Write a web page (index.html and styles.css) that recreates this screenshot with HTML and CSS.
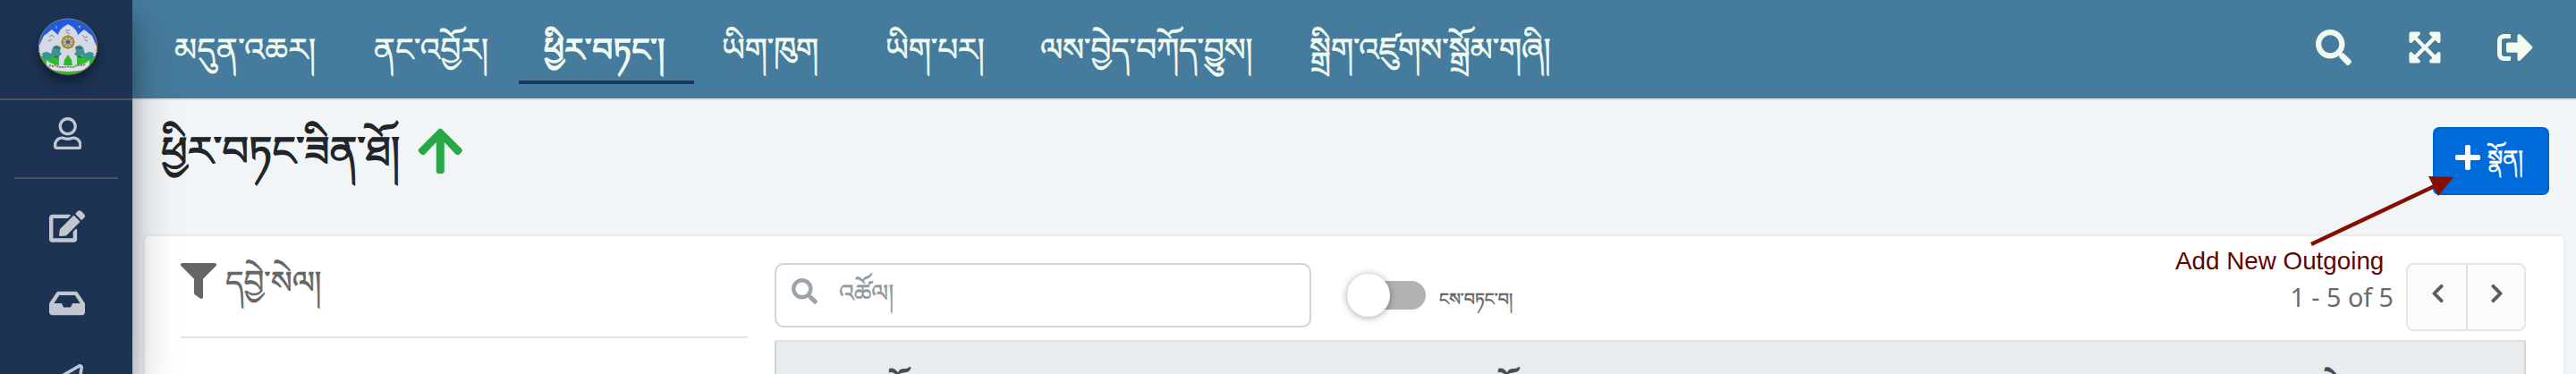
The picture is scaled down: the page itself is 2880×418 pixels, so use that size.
FILE: index.html
```html
<!DOCTYPE html>
<html lang="bo">
<head>
<meta charset="utf-8">
<title>ཕྱིར་བཏང་ཟིན་ཐོ།</title>
<link rel="stylesheet" href="styles.css">
</head>
<body>
<div class="app">
  <aside class="sidebar">
    <div class="brand">
      <svg class="logo" viewBox="0 0 68 66">
        <defs><clipPath id="seal"><ellipse cx="34" cy="33" rx="33" ry="31.5"/></clipPath></defs>
        <g clip-path="url(#seal)">
          <rect width="68" height="66" fill="#1f5ae0"/>
          <rect y="42" width="68" height="24" fill="#2cbf2c"/>
          <path d="M0 44V36L7 21L16 14L23 20Q24 13 34 8Q44 13 45 20L52 14L61 21L68 38V44Z" fill="#d5d9e6"/>
          <path d="M13 22l3-2 3 3M12 27l4-2M31 15h5M32 17l4 2M50 20l3 3 3-1M52 25l4 2" stroke="#666b75" stroke-width=".8" fill="none"/>
          <path d="M21 10v3" stroke="#b9c8ee"/><circle cx="47" cy="11" r="1.4" fill="#a8a055"/>
          <path d="M5 41q4-4 10 0l2-7q4-5 9 0l-1 5 4 4-6 2-5-2-6 5-6-3z" fill="#35969a"/>
          <path d="M63 41q-4-4-10 0l-2-7q-4-5-9 0l1 5-4 4 6 2 5-2 6 5 6-3z" fill="#35969a"/>
          <path d="M19 34l6 1M18 44l5 1M43 34l6 1M45 44l5 1" stroke="#65565d" stroke-width="2"/>
          <path d="M24 44l5-5 5 3 5-3 5 5v12H24z" fill="#d5d9e6"/>
          <path d="M34 42l4 6 1 7H29l1-7z" fill="#29b92c"/>
          <circle cx="34" cy="28" r="6.5" fill="#b7bed0" stroke="#a58a24" stroke-width="2"/>
          <path d="M34 20v16M26 28h16M28.500 22.500l11 11M39.500 22.500l-11 11" stroke="#a58a24" stroke-width="1.200"/>
          <circle cx="34" cy="28" r="2" fill="#4058c2"/>
          <path d="M10 48q3 4 14 6h20q11-2 14-6l0 10q-24 6-48 0z" fill="#dfe2e8"/>
          <path d="M13 54l4 1 3-1 4 2 5 0 5-.5 6 .5 4-2 5 0 5-1" fill="none" stroke="#777" stroke-width="2" stroke-dasharray="2 1"/>
        </g>
        <ellipse cx="34" cy="33" rx="32.600" ry="31" fill="none" stroke="#85803f" stroke-width="1"/>
      </svg>
    </div>
    <div class="user">
      <svg class="i-user" viewBox="0 0 448 512"><path d="M313.6 304c-28.7 0-42.5 16-89.6 16-47.1 0-60.8-16-89.6-16C60.2 304 0 364.2 0 438.4V464c0 26.500 21.500 48 48 48h352c26.500 0 48-21.500 48-48v-25.600c0-74.200-60.200-134.400-134.400-134.400zM400 464H48v-25.600c0-47.600 38.800-86.400 86.400-86.400 14.600 0 38.300 16 89.600 16 51.700 0 74.900-16 89.600-16 47.600 0 86.400 38.800 86.400 86.400V464zM224 288c79.500 0 144-64.500 144-144S303.500 0 224 0 80 64.500 80 144s64.500 144 144 144zm0-240c52.900 0 96 43.100 96 96s-43.100 96-96 96-96-43.100-96-96 43.100-96 96-96z"/></svg>
    </div>
    <div class="tools">
      <svg class="i-edit" viewBox="0 0 576 512"><path d="M402.6 83.2l90.2 90.2c3.8 3.8 3.8 10 0 13.8L274.4 405.6l-92.8 10.3c-12.4 1.4-22.9-9.1-21.5-21.5l10.3-92.8L388.8 83.2c3.8-3.8 10-3.8 13.8 0zm162-22.9l-48.8-48.8c-15.2-15.2-39.9-15.2-55.2 0l-35.4 35.4c-3.8 3.8-3.8 10 0 13.8l90.2 90.2c3.8 3.8 10 3.8 13.8 0l35.4-35.4c15.2-15.3 15.2-40 0-55.2zM384 346.2V448H64V128h229.8c3.2 0 6.2-1.3 8.5-3.5l40-40c7.6-7.6 2.2-20.5-8.5-20.5H48C21.5 64 0 85.5 0 112v352c0 26.5 21.5 48 48 48h352c26.5 0 48-21.5 48-48V306.2c0-10.7-12.9-16-20.5-8.5l-40 40c-2.2 2.3-3.5 5.300-3.5 8.5z"/></svg>
      <svg class="i-inbox" viewBox="0 0 576 512"><path d="M567.938 243.908L462.25 85.374A48.003 48.003 0 0 0 422.311 64H153.689a48 48 0 0 0-39.938 21.374L8.062 243.908A47.994 47.994 0 0 0 0 270.533V400c0 26.51 21.49 48 48 48h480c26.51 0 48-21.49 48-48V270.533a47.994 47.994 0 0 0-8.062-26.625zM162.252 128h251.497l85.333 128H376l-32 64H232l-32-64H76.918l85.334-128z"/></svg>
      <svg class="i-plane" viewBox="0 0 512 512"><path d="M440 6.5L24 246.4c-34.4 19.9-31.1 70.8 5.7 85.9L144 379.6V464c0 46.4 59.2 65.5 86.6 28.6l43.8-59.1 111.9 46.2c5.9 2.4 12.1 3.6 18.3 3.6 8.200 0 16.3-2.1 23.6-6.2 12.8-7.2 21.6-20 23.9-34.5l59.4-387.2c6.1-40.1-36.9-68.8-71.5-48.900zM192 464v-64.6l36.600 15.1L192 464zm212.600-28.700l-153.800-63.500L391 169.500c10.700-15.500-9.500-33.500-23.700-21.200L155.800 332.600 48 288 464 48l-59.400 387.300z"/></svg>
    </div>
  </aside>

  <div class="main">
    <header class="topbar">
      <nav class="nav">
        <a class="n1">མདུན་འཆར།</a>
        <a class="n2">ནང་འབྱོར།</a>
        <a class="n3 active">ཕྱིར་བཏང་།</a>
        <a class="n4">ཡིག་ཁུག</a>
        <a class="n5">ཡིག་པར།</a>
        <a class="n6">ལས་བྱེད་བཀོད་བྱུས།</a>
        <a class="n7">སྒྲིག་འཛུགས་སྒྲོམ་གཞི།</a>
      </nav>
      <div class="actions">
        <svg class="i-search" viewBox="0 0 512 512"><path d="M505 442.7L405.3 343c-4.5-4.5-10.6-7-17-7H372c27.600-35.300 44-79.700 44-128C416 93.100 322.900 0 208 0S0 93.100 0 208s93.100 208 208 208c48.300 0 92.700-16.400 128-44v16.300c0 6.400 2.500 12.500 7 17l99.700 99.700c9.400 9.400 24.600 9.400 33.900 0l28.300-28.300c9.400-9.400 9.400-24.600.1-34zM208 336c-70.700 0-128-57.200-128-128 0-70.700 57.200-128 128-128 70.700 0 128 57.200 128 128 0 70.700-57.200 128-128 128z"/></svg>
        <svg class="i-expand" viewBox="0 0 448 512"><path d="M448 344v112a23.940 23.940 0 0 1-24 24H312c-21.390 0-32.090-25.900-17-41l36.200-36.200L224 295.600 116.770 402.900 153 439c15.090 15.100 4.390 41-17 41H24a23.940 23.940 0 0 1-24-24V344c0-21.400 25.890-32.100 41-17l36.190 36.200L184.460 256 77.180 148.700 41 185c-15.100 15.100-41 4.400-41-17V56a23.940 23.940 0 0 1 24-24h112c21.390 0 32.090 25.900 17 41l-36.200 36.200L224 216.400l107.230-107.300L295 73c-15.090-15.100-4.390-41 17-41h112a23.940 23.940 0 0 1 24 24v112c0 21.400-25.890 32.100-41 17l-36.190-36.200L263.540 256l107.280 107.300L407 327.100c15.100-15.200 41-4.500 41 16.900z"/></svg>
        <svg class="i-out" viewBox="0 0 512 512"><path d="M497 273L329 441c-15 15-41 4.500-41-17v-96H152c-13.300 0-24-10.700-24-24v-96c0-13.300 10.700-24 24-24h136V88c0-21.400 25.900-32 41-17l168 168c9.300 9.400 9.300 24.600 0 34zM192 436v-40c0-6.600-5.400-12-12-12H96c-17.700 0-32-14.300-32-32V160c0-17.700 14.300-32 32-32h84c6.600 0 12-5.400 12-12V76c0-6.600-5.400-12-12-12H96c-53 0-96 43-96 96v192c0 53 43 96 96 96h84c6.600 0 12-5.400 12-12z"/></svg>
      </div>
    </header>

    <section class="heading">
      <h1>ཕྱིར་བཏང་ཟིན་ཐོ།</h1>
      <svg class="i-up" viewBox="0 0 448 512"><path d="M34.900 289.500l-22.200-22.200c-9.400-9.400-9.400-24.600 0-33.900L207 39c9.400-9.400 24.600-9.400 33.900 0l194.300 194.300c9.400 9.400 9.400 24.600 0 33.900L413 289.400c-9.500 9.500-25 9.300-34.300-.4L264 168.600V456c0 13.300-10.700 24-24 24h-32c-13.300 0-24-10.700-24-24V168.600L69.200 289.100c-9.300 9.800-24.800 10-34.300.4z"/></svg>
      <button class="add">
        <svg class="i-plus" viewBox="0 0 448 512"><path d="M416 208H272V64c0-17.670-14.330-32-32-32h-32c-17.670 0-32 14.330-32 32v144H32c-17.670 0-32 14.330-32 32v32c0 17.670 14.330 32 32 32h144v144c0 17.670 14.330 32 32 32h32c17.670 0 32-14.330 32-32V304h144c17.670 0 32-14.330 32-32v-32c0-17.670-14.330-32-32-32z"/></svg>
        <span>སྣོན།</span>
      </button>
    </section>

    <section class="card">
      <div class="filter">
        <div class="filter-title">
          <svg class="i-filter" viewBox="0 0 512 512"><path d="M487.976 0H24.028C2.710 0-8.047 25.866 7.058 40.971L192 225.941V432c0 7.831 3.821 15.170 10.237 19.662l80 55.980C298.020 518.690 320 507.493 320 487.980V225.941l184.947-184.970C520.021 25.896 509.338 0 487.976 0z"/></svg>
          <span>དབྱེ་སེལ།</span>
        </div>
      </div>
      <div class="list">
        <div class="toolbar">
          <div class="search">
            <svg class="i-find" viewBox="0 0 512 512"><path d="M505 442.7L405.3 343c-4.5-4.5-10.6-7-17-7H372c27.600-35.300 44-79.700 44-128C416 93.100 322.900 0 208 0S0 93.100 0 208s93.100 208 208 208c48.300 0 92.700-16.400 128-44v16.300c0 6.400 2.500 12.500 7 17l99.700 99.700c9.400 9.400 24.600 9.400 33.900 0l28.300-28.300c9.400-9.400 9.400-24.600.1-34zM208 336c-70.700 0-128-57.200-128-128 0-70.700 57.200-128 128-128 70.700 0 128 57.200 128 128 0 70.700-57.200 128-128 128z"/></svg>
            <span>འཚོལ།</span>
          </div>
          <div class="switch"><i></i></div>
          <span class="switch-label">ངས་བཏང་བ།</span>
          <span class="range">1 - 5 of 5</span>
          <div class="pager">
            <b><svg viewBox="0 0 320 512"><path d="M34.520 239.030L228.870 44.690c9.370-9.370 24.570-9.370 33.940 0l22.670 22.670c9.360 9.360 9.370 24.520.04 33.900L131.490 256l154.020 154.750c9.340 9.380 9.320 24.540-.04 33.900l-22.670 22.670c-9.370 9.370-24.570 9.370-33.940 0L34.520 272.970c-9.370-9.370-9.370-24.570 0-33.940z"/></svg></b>
            <b><svg class="flip" viewBox="0 0 320 512"><path d="M34.520 239.030L228.870 44.690c9.370-9.370 24.570-9.370 33.940 0l22.670 22.670c9.360 9.360 9.370 24.520.04 33.900L131.490 256l154.020 154.750c9.340 9.380 9.320 24.540-.04 33.900l-22.670 22.670c-9.370 9.370-24.570 9.370-33.940 0L34.520 272.970c-9.370-9.370-9.370-24.570 0-33.940z"/></svg></b>
          </div>
        </div>
        <div class="thead">
          <span class="c1">ཐོ།</span>
          <span class="c2">ཐོ།</span>
          <span class="c3">དེ།</span>
        </div>
      </div>
    </section>
  </div>

  <div class="note">Add New Outgoing</div>
  <svg class="arrow" viewBox="0 0 170 90"><path d="M4 83L144 17" stroke="#860e00" stroke-width="4.500"/><path d="M135 7L163 8L146 29Z" fill="#860e00"/></svg>
</div>
</body>
</html>
```
FILE: styles.css
```css
* { box-sizing: border-box; }
html, body { margin: 0; height: 418px; overflow: hidden; }
body { font-family: "Noto Sans", "Noto Serif Tibetan", "Noto Sans Tibetan", "Microsoft Himalaya", "DejaVu Sans", serif; background: #f1f5f8; }
svg { display: block; flex: none; }
.app { position: relative; display: flex; width: 2880px; height: 418px; overflow: hidden; }

.sidebar { position: relative; z-index: 2; width: 148px; height: 418px; flex: none; background: #1d3354; box-shadow: 0 28px 56px rgba(0,0,0,.25), 0 20px 20px rgba(0,0,0,.2); fill: #c1c6cf; }
.brand { height: 112px; padding: 19px 0 0 42px; border-bottom: 2px solid #4d545d; }
.logo { width: 68px; height: 66px; border-radius: 50%; box-shadow: 0 10px 20px rgba(0,0,0,.19), 0 6px 6px rgba(0,0,0,.23); }
.user { height: 88px; margin: 0 16px; padding: 19px 0 0 43.500px; border-bottom: 2px solid #4d545d; }
.i-user { width: 31.500px; height: 36px; }
.tools { padding: 35px 0 0 55px; }
.i-edit { width: 40px; height: 36px; }
.i-inbox { width: 40px; height: 36px; margin-top: 50px; }
.i-plane { width: 38px; height: 38px; margin-top: 50px; }

.main { flex: 1; min-width: 0; display: flex; flex-direction: column; }
.topbar { display: flex; justify-content: space-between; height: 112px; flex: none; background: #457b9d; border-bottom: 2px solid #dee2e6; color: #f1faee; fill: #f1faee; }
.nav { display: flex; padding-left: 19px; height: 94px; font-size: 35.500px; -webkit-text-stroke: .7px; }
.nav a { flex: none; padding: 26px 0 0 28px; line-height: 56px; white-space: nowrap; height: 94px; border-bottom: 4px solid transparent; }
.n1 { width: 223px; letter-spacing: .7px; } .n2 { width: 190px; letter-spacing: .4px; } .n3 { width: 196px; letter-spacing: .6px; } .nav .n4 { width: 186px; padding-left: 31px; }
.n5 { width: 173px; } .n6 { width: 301px; } .n7 { width: 320px; }
.nav .active { border-bottom-color: #1d3557; -webkit-text-stroke: 1.500px; }
.actions { display: flex; padding: 33px 48px 0 0; }
.i-search { width: 40px; height: 40px; }
.i-expand { width: 36px; height: 40px; margin-left: 64px; }
.i-out { width: 40px; height: 40px; margin-left: 63px; }

.heading { display: flex; align-items: flex-start; height: 152px; flex: none; padding: 0 30px 0 32px; }
h1 { margin: 0; width: 287px; padding-top: 16px; font-size: 46.300px; line-height: 80px; font-weight: 400; -webkit-text-stroke: 1.300px; color: #212529; white-space: nowrap; }
.i-up { width: 50.500px; height: 57.600px; margin-top: 27.700px; fill: #28a745; }
.add { display: flex; align-items: flex-start; width: 130px; height: 76px; margin: 30px 0 0 auto; padding: 16px 0 0 23px; border: 2px solid #0062cc; border-radius: 7px; background: #006bdb; color: #fff; fill: #fff; font: 25.500px/32px "Noto Sans", "Noto Serif Tibetan", serif; -webkit-text-stroke: .6px; }
.i-plus { width: 28px; height: 32px; margin-right: 8px; }

.card { display: flex; height: 300px; flex: none; margin: 0 14px; padding: 30px 42px 0 40px; border-radius: 5px 5px 0 0; background: #fff; box-shadow: 0 0 4px rgba(0,0,0,.1); color: #666; }
.filter { width: 634px; margin-right: 30px; flex: none; }
.filter-title { display: flex; height: 84px; border-bottom: 2px solid #e3e4e6; font-size: 35.500px; line-height: 41px; -webkit-text-stroke: .6px; }
.i-filter { width: 40px; height: 40px; margin-right: 10px; fill: #666; }
.list { flex: 1; min-width: 0; }
.toolbar { display: flex; height: 86px; }
.search { display: flex; width: 600px; height: 72px; flex: none; padding: 14px 0 0 16px; border: 2px solid #ced4da; border-radius: 10px; color: #929ba2; font-size: 27px; line-height: 34px; -webkit-text-stroke: .5px; }
.i-find { width: 29px; height: 29px; margin: 1px 24px 0 1px; fill: #9aa3ae; }
.switch { width: 88px; height: 32px; margin: 20px 0 0 40px; border-radius: 16px; background: #b2b2b2; flex: none; }
.switch i { display: block; width: 48px; height: 48px; margin-top: -8px; border-radius: 50%; background: #fff; box-shadow: 0 1px 8px rgba(0,0,0,.35); }
.switch-label { margin: 25px 0 0 15px; font-size: 19px; line-height: 30px; white-space: nowrap; -webkit-text-stroke: .5px; }
.range { margin: 18px 14px 0 auto; font-size: 28.700px; line-height: 40px; white-space: nowrap; color: #6b6b6b; }
.pager { display: flex; width: 134px; height: 76px; flex: none; border: 2px solid #e4e5e7; border-radius: 8px; background: #fafbfd; fill: #5c5c5c; }
.pager b { width: 66px; padding: 20px 0 0 26px; }
.pager b + b { border-left: 2px solid #dee0e3; padding-left: 25px; }
.pager svg { width: 15px; height: 24px; }
.flip { transform: scaleX(-1); }
.thead { display: flex; height: 120px; padding: 25px 0 0 126px; border: 2px solid #d3d6d9; border-top-color: #dee2e6; background: #e9ecef; color: #454d55; font-size: 30px; line-height: 50px; font-weight: 700; }
.c1 { width: 681px; } .c2 { width: 922px; }

.note { position: absolute; z-index: 3; left: 2432px; top: 275px; font: 27.800px/34px "Liberation Sans", Arial, sans-serif; color: #5f0500; white-space: nowrap; }
.arrow { position: absolute; z-index: 3; left: 2580px; top: 190px; width: 170px; height: 90px; fill: none; }
```
